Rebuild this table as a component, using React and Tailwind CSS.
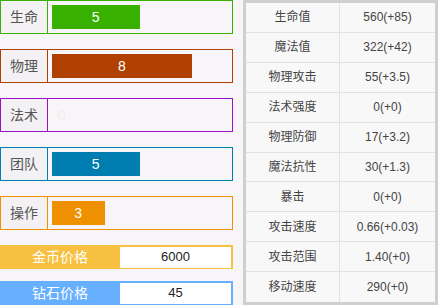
import React from "react";

const stats = [
  { label: "生命", value: 5, border: "border-[#38b000]", bar: "bg-[#38b000]" },
  { label: "物理", value: 8, border: "border-[#b04000]", bar: "bg-[#b04000]" },
  { label: "法术", value: 0, border: "border-[#9a10c8]", bar: "bg-[#9a10c8]" },
  { label: "团队", value: 5, border: "border-[#007db0]", bar: "bg-[#007db0]" },
  { label: "操作", value: 3, border: "border-[#ee9000]", bar: "bg-[#ee9000]" },
];

const attrs = [
  ["生命值", "560(+85)"],
  ["魔法值", "322(+42)"],
  ["物理攻击", "55(+3.5)"],
  ["法术强度", "0(+0)"],
  ["物理防御", "17(+3.2)"],
  ["魔法抗性", "30(+1.3)"],
  ["暴击", "0(+0)"],
  ["攻击速度", "0.66(+0.03)"],
  ["攻击范围", "1.40(+0)"],
  ["移动速度", "290(+0)"],
];

const font = { fontFamily: '"Liberation Sans", "Noto Sans CJK SC", sans-serif' };

export default function App() {
  return (
    <div
      className="w-[438px] h-[305px] bg-[#f7f5f7] flex overflow-hidden"
      style={font}
    >
      <div className="w-[233px] flex flex-col">
        {stats.map((s, i) => (
          <div
            key={i}
            className={`h-[34px] border ${s.border} flex mb-[15px]`}
          >
            <div
              className={`w-[47px] border-r ${s.border} bg-[#f3f1f3] flex items-center justify-center text-[14px] text-[#555]`}
            >
              {s.label}
            </div>
            <div className="flex-1 pl-[4px] flex items-center">
              <div
                className={`h-[24px] ${s.value ? s.bar : ""} flex items-center justify-center text-white text-[14px]`}
                style={{ width: s.value ? s.value * 17.5 : 20 }}
              >
                {s.value === 0 ? <span className="text-[#f0eef0]">0</span> : s.value}
              </div>
            </div>
          </div>
        ))}
        <div className="h-[24px] bg-[#f8c040] flex items-center pr-[2px]">
          <div className="w-[120px] text-center text-white text-[14px]">金币价格</div>
          <div className="flex-1 h-[21px] bg-white flex items-center justify-center text-[13px] text-[#222]">
            6000
          </div>
        </div>
        <div className="h-[24px] mt-[12px] bg-[#66b0ff] flex items-center pr-[2px]">
          <div className="w-[120px] text-center text-white text-[14px]">钻石价格</div>
          <div className="flex-1 h-[21px] bg-white flex items-center justify-center text-[13px] text-[#222]">
            45
          </div>
        </div>
      </div>
      <div className="ml-[10px] w-[195px] h-[305px] border-[3px] border-[#cfcfcf] bg-[#f9f8f9] flex flex-col">
        {attrs.map(([k, v], i) => (
          <div
            key={i}
            className={`flex h-[30px] ${i < attrs.length - 1 ? "border-b border-[#e2e2e2]" : ""}`}
          >
            <div className="w-[94px] border-r border-[#e2e2e2] flex items-center justify-center text-[12px] text-[#444]">
              {k}
            </div>
            <div className="flex-1 flex items-center justify-center text-[12px] text-[#444]">
              {v}
            </div>
          </div>
        ))}
      </div>
    </div>
  );
}
